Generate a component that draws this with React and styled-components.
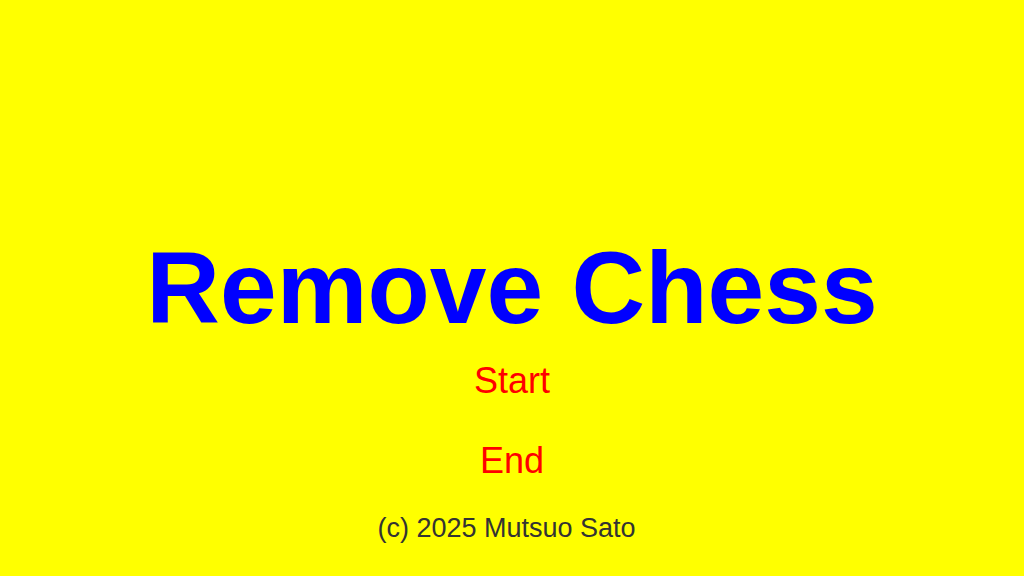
import styled, { createGlobalStyle } from "styled-components";

const GlobalStyle = createGlobalStyle`
  html, body {
    margin: 0;
    padding: 0;
    background-color: #ffff00;
  }
`;

function App() {
  return (
    <>
      <GlobalStyle />
      <Screen>
        <Title>Remove Chess</Title>
        <MenuItem $top="23.5px">Start</MenuItem>
        <MenuItem $top="44px">End</MenuItem>
        <Copyright>(c) 2025 Mutsuo Sato</Copyright>
      </Screen>
    </>
  );
}

export default App;

const Screen = styled.div`
  width: 100vw;
  height: 100vh;
  box-sizing: border-box;
  padding-top: 237px;
  display: flex;
  flex-direction: column;
  align-items: center;
  background-color: #ffff00;
  font-family: "Liberation Sans", Arial, sans-serif;
  overflow: hidden;
`;

const Title = styled.h1`
  margin: 0;
  font-size: 102px;
  line-height: 1;
  font-weight: bold;
  color: #0000ff;
`;

const MenuItem = styled.div`
  margin-top: ${(p) => p.$top};
  font-size: 36px;
  line-height: 1;
  color: #ff0000;
  cursor: pointer;
`;

const Copyright = styled.div`
  margin-top: 36px;
  padding-right: 11px;
  font-size: 27px;
  line-height: 1;
  color: #333333;
`;
